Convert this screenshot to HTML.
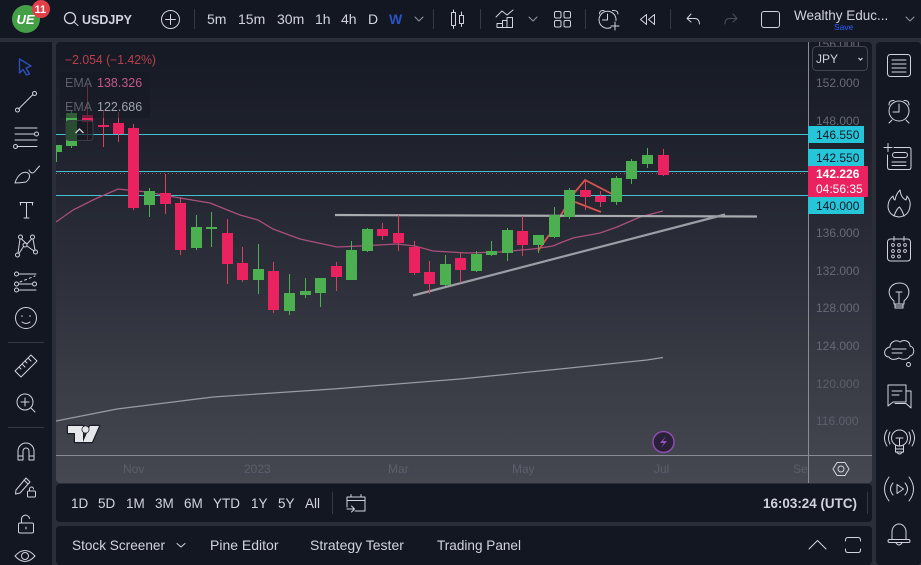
<!DOCTYPE html>
<html><head><meta charset="utf-8"><style>
html,body{margin:0;padding:0;background:#2a2e39;width:921px;height:565px;overflow:hidden}
svg{display:block}
text{font-family:"Liberation Sans",sans-serif}
.ic{fill:none;stroke:#d1d4dc;stroke-width:1;stroke-linecap:round;stroke-linejoin:round}
.t{fill:#d1d4dc;font-size:14px}
.p{font-size:12px;fill:#676a75}
.x{font-size:12px;fill:#5c5f6a}
.b{font-size:12px;fill:#131722}
.s{font-size:13.500px;fill:#d1d4dc}
</style></head><body>
<svg width="921" height="565" viewBox="0 0 921 565" xmlns="http://www.w3.org/2000/svg">
<defs>
<linearGradient id="bg" x1="0" y1="42" x2="0" y2="483" gradientUnits="userSpaceOnUse"><stop offset="0" stop-color="#151924"/><stop offset=".5" stop-color="#2b2e38"/><stop offset="1" stop-color="#464851"/></linearGradient>
<clipPath id="chart"><rect x="56" y="42" width="752" height="413"/></clipPath>
<clipPath id="axis"><rect x="809" y="42" width="63" height="413"/></clipPath>
<clipPath id="tm"><rect x="56" y="456" width="752" height="27"/></clipPath>
</defs>
<rect width="921" height="565" fill="#2a2e39"/>
<rect width="921" height="38" fill="#131722"/>
<rect x="0" y="42" width="52" height="523" fill="#131722"/>
<rect x="876" y="42" width="45" height="523" rx="4" fill="#131722"/>
<rect x="56" y="42" width="816" height="441" rx="4" fill="url(#bg)"/>
<rect x="56" y="484" width="816" height="38" rx="4" fill="#131722"/>
<rect x="56" y="526" width="816" height="39" rx="4" fill="#131722"/>

<!-- chart -->
<g clip-path="url(#chart)">
<path d="M56 134.500H808M56 171.500H808M56 195.500H808" stroke="#44c0d2" stroke-width="1" fill="none"/>
<path d="M56 173.500H808" stroke="#b04a60" stroke-width="1" stroke-dasharray="1 3" fill="none"/>
<path d="M56 222L73 210L95 199L118 189L147 192L180 198L210 203L240 215L258 220L273 229L300 239L337 247L360 246L397 244L415 246L433 251L467 253L500 252L533 249L553 246L560 243L573 238L600 233L617 227L640 217L663 211" fill="none" stroke="#a94f7c" stroke-width="1.300"/>
<path d="M56 421L117 409L213 397L333 389L460 379L560 369L647 360L663 357.500" fill="none" stroke="#9a9ca3" stroke-width="1.200"/>
<!-- drawings behind candles -->
<path d="M538 251L549 235M553 228L575 192L585 180L612 194M575 202L601 212" fill="none" stroke="#d9544f" stroke-width="1.800"/>
<path d="M335 215L757 216.500" stroke="#a9abb1" stroke-width="2.200" fill="none"/>
<path d="M413 295.500L725 214.500" stroke="#9c9ea6" stroke-width="2.200" fill="none"/>
<!-- green wicks -->
<path d="M56.500 145V162M71.500 110V148M149.500 188V217M196.500 215V250M211.500 212V247M258.500 244V294M289.500 274V315M305.500 278V298M320.500 278V307M351.500 241V280M367.500 228V252M445.500 255V286M476.500 251V272M491.500 241V256M507.500 228V261M538.500 235V253M554.500 207V238M569.500 188V219M616.500 176V205M631.500 159V184M647.500 148V168" stroke="#4caf50" stroke-width="1" fill="none"/>
<!-- red wicks -->
<path d="M87.500 85V140M103.500 110V147M118.500 112V142M133.500 124V210M165.500 174V214M180.500 197V255M227.500 219V284M242.500 247V282M273.500 262V313M336.500 262V291M382.500 223V240M398.500 215V251M414.500 241V275M429.500 261V294M460.500 253V283M522.500 216V256M585.500 180V210M600.500 191V207M663.500 149V176" stroke="#d9405f" stroke-width="1" fill="none"/>
<!-- green bodies -->
<path fill="#4caf50" d="M51 145h11v7h-11zM66 113h11v33h-11zM144 191h11v14h-11zM191 227h11v21h-11zM206 227h11v2h-11zM253 269h11v11h-11zM284 293h11v18h-11zM300 291h11v4h-11zM315 278h11v15h-11zM346 250h11v30h-11zM362 229h11v22h-11zM440 264h11v21h-11zM471 254h11v17h-11zM486 251h11v4h-11zM502 230h11v23h-11zM533 235h11v10h-11zM549 215h11v22h-11zM564 190h11v27h-11zM611 178h11v24h-11zM626 161h11v18h-11zM642 155h11v9h-11z"/>
<!-- red bodies -->
<path fill="#ea2260" d="M82 115h11v7h-11zM98 125h11v2h-11zM113 123h11v11h-11zM128 128h11v80h-11zM160 193h11v11h-11zM175 203h11v47h-11zM222 233h11v31h-11zM237 263h11v17h-11zM268 271h11v39h-11zM331 266h11v11h-11zM377 229h11v7h-11zM393 233h11v10h-11zM409 247h11v26h-11zM424 272h11v12h-11zM455 258h11v12h-11zM517 231h11v14h-11zM580 190h11v7h-11zM595 196h11v6h-11zM658 155h11v20h-11z"/>
<!-- legend -->
<rect x="60" y="72" width="90" height="46" fill="#151923" fill-opacity=".55"/>
<rect x="66" y="120.500" width="27" height="20" rx="3" fill="#15181f" fill-opacity=".65" stroke="#3a3d46"/>
<path d="M75.500 133L79.500 129L83.500 133" fill="none" stroke="#d1d4dc" stroke-width="1.300"/>
<!-- lightning -->
<circle cx="663.500" cy="442" r="10.500" fill="#2a2038" stroke="#8e4bb0" stroke-width="1.500"/>
<path d="M666 436L660 443H664L661 448L667 441H663Z" fill="#9c4fc0"/>
<!-- TV logo -->
<path d="M68 426H83V442H75V433H68ZM90 426H99L92 442H83Z" fill="#e6e7eb" stroke="#1b1d26" stroke-width="2.500" stroke-linejoin="round" style="paint-order:stroke"/>
<circle cx="85.500" cy="429.500" r="3.200" fill="#e6e7eb" stroke="#1b1d26" stroke-width="1.500" style="paint-order:stroke"/>
</g>
<text x="65" y="64" style="font-size:12.500px" fill="#b8404c" textLength="91" lengthAdjust="spacingAndGlyphs">−2.054 (−1.42%)</text>
<text x="65" y="87" style="font-size:12.500px" fill="#5d606b">EMA</text>
<text x="97" y="87" style="font-size:12.500px" fill="#c4568a">138.326</text>
<text x="65" y="111" style="font-size:12.500px" fill="#5d606b">EMA</text>
<text x="97" y="111" style="font-size:12.500px" fill="#a0a3ab">122.686</text>

<!-- axes -->
<path d="M808.500 42V483M56 455.500H872" stroke="#8a8c93" stroke-width="1" fill="none"/>
<g clip-path="url(#axis)">
<text x="816" y="48" class="p">156.000</text>
<text x="816" y="87" class="p">152.000</text>
<text x="816" y="125" class="p">148.000</text>
<text x="816" y="237" class="p">136.000</text>
<text x="816" y="275" class="p">132.000</text>
<text x="816" y="312" class="p">128.000</text>
<text x="816" y="350" class="p">124.000</text>
<text x="816" y="388" class="x">120.000</text>
<text x="816" y="425" class="x">116.000</text>
</g>
<g clip-path="url(#tm)">
<text x="123" y="473" class="x">Nov</text>
<text x="244" y="473" class="x">2023</text>
<text x="388" y="473" class="x">Mar</text>
<text x="512" y="473" class="x">May</text>
<text x="654" y="473" class="x">Jul</text>
<text x="793" y="473" class="x">Sep</text>
</g>
<rect x="812.500" y="46.500" width="55" height="24" rx="4" fill="#171b26" stroke="#434651"/>
<text x="816" y="63" style="font-size:12px" fill="#d1d4dc">JPY</text>
<path d="M858.500 58L860.500 60L862.500 58" fill="none" stroke="#d1d4dc" stroke-width="1.200"/>
<rect x="808" y="126" width="56" height="17" fill="#26c6da"/><text x="816" y="139" class="b">146.550</text>
<rect x="808" y="149" width="56" height="17" fill="#26c6da"/><text x="816" y="162" class="b">142.550</text>
<rect x="808" y="197" width="56" height="17" fill="#26c6da"/><text x="816" y="210" class="b">140.000</text>
<rect x="808" y="166" width="60" height="31" rx="1" fill="#ea2260"/>
<text x="816" y="178" style="font-size:12px;font-weight:bold" fill="#fff">142.226</text>
<text x="816" y="193" style="font-size:12px" fill="#fff">04:56:35</text>
<path d="M837 462.500H845L849 469L845 475.500H837L833 469Z M844 469a3 3 0 1 1-6 0a3 3 0 1 1 6 0" class="ic"/>

<!-- top bar -->
<circle cx="26" cy="19" r="14" fill="#43a047"/>
<text x="16.500" y="24" style="font-size:13px;font-weight:bold;font-style:italic" fill="#fff">UE</text>
<circle cx="41" cy="9" r="9" fill="#e0404a"/>
<text x="34.500" y="13" style="font-size:11px;font-weight:bold" fill="#fff">11</text>
<circle cx="70" cy="18" r="5.500" class="ic" style="stroke-width:1.300"/><path d="M74 22L78 25.500" class="ic"/>
<text x="82" y="24" style="font-size:13px;font-weight:bold" fill="#d1d4dc" textLength="50" lengthAdjust="spacingAndGlyphs">USDJPY</text>
<circle cx="170.500" cy="19.500" r="9" class="ic"/><path d="M170.500 14.500V24.500M165.500 19.500H175.500" class="ic"/>
<path d="M194.500 9V29M433.500 9V29M480.500 9V29M585.500 9V29M670.500 9V29" stroke="#363a45" fill="none"/>
<text x="207" y="24" class="t">5m</text><text x="238" y="24" class="t">15m</text><text x="277" y="24" class="t">30m</text>
<text x="315" y="24" class="t">1h</text><text x="341" y="24" class="t">4h</text><text x="368" y="24" class="t">D</text>
<text x="389" y="24" style="font-size:14px;font-weight:bold" fill="#2a52c0">W</text>
<path d="M415 17L419 21L423 17" class="ic" style="stroke:#9598a1"/>
<path d="M451.500 12.500h4v13h-4zM453.500 10v2.500M453.500 25.500v3M459.500 15.500h4v8h-4zM461.500 12v3.500M461.500 23.500v3" class="ic"/>
<path d="M496 17L502 11L507 15L513 10M497 27.500v-4h5.500v4zM502.500 27.500v-7h4.500v7zM507 27.500v-10h5.500v10z" class="ic"/>
<path d="M529 17L533 21L537 17" class="ic" style="stroke:#9598a1"/>
<rect x="554.500" y="11.500" width="6.500" height="6.500" rx="1.500" class="ic"/><rect x="564" y="11.500" width="6.500" height="6.500" rx="1.500" class="ic"/><rect x="554.500" y="20.500" width="6.500" height="6.500" rx="1.500" class="ic"/><rect x="564" y="20.500" width="6.500" height="6.500" rx="1.500" class="ic"/>
<path d="M611 27.500A8.500 8.500 0 1 1 616 20.500M607.500 14V20H602.500M599.500 14Q599.500 10 604 10.500M618 14Q618 10 612.500 10.500M611 26H619M615 22V30" class="ic"/>
<path d="M646.500 14.500L640.500 19.500L646.500 24.500ZM654.500 14.500L648.500 19.500L654.500 24.500Z" class="ic"/>
<path d="M691 14L687 18.500L691 22M687 18.500H695Q699 18.500 699.500 24" class="ic"/>
<path d="M733 14L737 18.500L733 22M737 18.500H729Q725 18.500 725 24" class="ic" style="stroke:#4a4e59"/>
<rect x="761.500" y="11.500" width="18" height="16" rx="2.500" class="ic"/>
<text x="794" y="20" style="font-size:13.500px" fill="#d1d4dc">Wealthy Educ...</text>
<text x="834" y="30" style="font-size:8.500px" fill="#2962ff">Save</text>
<path d="M906 17L910 21L914 17" class="ic" style="stroke:#9598a1"/>

<!-- left toolbar -->
<path d="M19.500 59L31 66L26 68L29.500 74L26.500 75L23 69.500L19.500 73Z" fill="none" stroke="#2d4fb8" stroke-width="1.400" stroke-linejoin="round"/>
<path d="M18.500 109L33 94.500" class="ic"/><circle cx="17.500" cy="110" r="2" class="ic"/><circle cx="34.500" cy="93.500" r="2" class="ic"/>
<path d="M15 128H37M15 134H34M15 140H37M17 146.500H37" class="ic"/><circle cx="36.500" cy="134" r="2" class="ic"/><circle cx="15.500" cy="146.500" r="2" class="ic"/>
<path d="M15 183Q17 176 22 173Q27 171 29 174Q31 178 26 182Q20 183 15 183ZM29 170Q32 176 36 170L39.500 166" class="ic"/>
<path d="M20 202.500H33M26.500 202.500V218M24 218H29M20.500 202.500V205M32.500 202.500V205" class="ic"/>
<circle cx="20.500" cy="237" r="2" class="ic"/><circle cx="32.500" cy="237" r="2" class="ic"/><circle cx="17.500" cy="255" r="2" class="ic"/><circle cx="35.500" cy="252" r="2" class="ic"/><circle cx="25" cy="245" r="2" class="ic"/>
<path d="M20 239L18 253M21.500 239L27 244M31.500 239L27 244M33 239L35 250M23.500 246.500L19 253.500M27 246L34 251" class="ic"/>
<circle cx="16.500" cy="274" r="2" class="ic"/><circle cx="16.500" cy="284" r="2" class="ic"/><circle cx="16.500" cy="290" r="2" class="ic"/><circle cx="34.500" cy="284" r="2" class="ic"/>
<path d="M19 274H36M19 284H32M19 290H36" class="ic"/><path d="M20 282L35 276" class="ic" style="stroke-dasharray:2 3"/>
<circle cx="26" cy="318" r="10.500" class="ic"/><circle cx="22" cy="316" r=".8" fill="#d1d4dc"/><circle cx="30" cy="316" r=".8" fill="#d1d4dc"/><path d="M22 322Q26 325 30 322" class="ic"/>
<path d="M8 342.500H44M8 427.500H44" stroke="#363a45" fill="none"/>
<path d="M15 371L31 355L37 361L21 377ZM19 367l2 2M22 364l3 3M25 361l2 2M28 358l3 3" class="ic"/>
<circle cx="25" cy="402" r="8" class="ic"/><path d="M31 408L35 412M25 398V406M21 402H29" class="ic"/>
<path d="M18 460V451a8 8 0 0 1 16 0V460H29V451a3 3 0 0 0-6 0V460ZM18 456H23M29 456H34" class="ic"/>
<path d="M16 490L26 478L30 482L20 493L15.500 494ZM24 480L28 484" class="ic"/><rect x="27.500" y="491" width="8" height="6" rx="1" class="ic"/><path d="M29.500 491v-2a2 2 0 0 1 4 0" class="ic"/>
<rect x="18.500" y="523" width="15" height="10" rx="1.500" class="ic"/><path d="M21.500 523V520a4 4 0 0 1 8-1.500M26 527V529" class="ic"/>
<path d="M15 556Q25 545 35 556Q25 567 15 556Z" class="ic"/><circle cx="25" cy="556" r="3.500" class="ic"/>

<!-- right toolbar -->
<rect x="887.500" y="54.500" width="23" height="22" rx="3" class="ic"/><path d="M892 60H906M892 64H906M892 68H906M892 72H906" class="ic"/>
<circle cx="899" cy="111" r="10" class="ic"/><path d="M899 104V112H893M889 105Q889 100 894 100.500M909 105Q909 100 904 100.500M892 120L889 123M906 120L909 123" class="ic"/>
<path d="M894 147.500H909Q911 147.500 911 149.500V167Q911 169.500 909 169.500H890Q887.500 169.500 887.500 167V155M888 143.500V151.500M884 147.500H892M895 152.500H905a2.500 2.500 0 0 1 0 5H895a2.500 2.500 0 0 1 0-5ZM892 162H906M892 165.500H906" class="ic"/>
<path d="M900 190Q901 198 906 200Q907 197 907 196Q911 201 910 206Q909 216 899 217Q889 216 888 207Q888 200 893 196Q893 199 895 200Q896 194 900 190ZM894 216Q897 208 899.500 207Q902 210 904 216" class="ic"/>
<rect x="887.500" y="239" width="23" height="22" rx="3" class="ic"/><path d="M894 236.500V241M904 236.500V241" class="ic"/>
<g fill="none" stroke="#d1d4dc" stroke-width=".9"><circle cx="893" cy="245" r="1.400"/><circle cx="899" cy="245" r="1.400"/><circle cx="905" cy="245" r="1.400"/><circle cx="893" cy="251" r="1.400"/><circle cx="899" cy="251" r="1.400"/><circle cx="905" cy="251" r="1.400"/><circle cx="893" cy="256.500" r="1.400"/><circle cx="899" cy="256.500" r="1.400"/></g>
<path d="M894 301Q887 295 890 288Q893 283 899.500 283Q906 283 908 288Q911 295 904 301V304H894ZM895 304V308H903V304M895 306H903M896 292H902M899 292V303" class="ic"/>
<path d="M890 347C890 342 896 339 900 342C904 339 910 341 910 346C915 347 915 355 910 356C908 360 902 360 899 358C895 360 891 360 889 357C883 357 883 348 890 347ZM892 349H906M892 353H902" class="ic"/><circle cx="908.500" cy="364.500" r="2" class="ic"/>
<path d="M888 385H906V402H893L888 406ZM892 391H902M892 395H899M906 391H911V408L906 403.500H895" class="ic"/>
<circle cx="899.500" cy="438" r="8" class="ic"/><path d="M895.500 445.500V452H903.500V445.500M896 449H903M896.500 452Q899.500 456 902.500 452M896 438H903M899.500 438V446M890 432Q887 438 890 444M887 430Q882 438 887 446M909 432Q912 438 909 444M912 430Q917 438 912 446" class="ic"/>
<path d="M897 484.500L903.500 489L897 493.500ZM893 483Q888 489 893 495M889 477Q880 489 889 501M905 483Q910 489 905 495M909 477Q918 489 909 501" class="ic"/>
<path d="M892 539V532a7 8 0 0 1 14 0V539M889.500 539.500H908.500a1.500 1.500 0 0 1 0 3H889.500a1.500 1.500 0 0 1 0-3ZM896 543Q899 547 902 543" class="ic"/>

<!-- bottom bar -->
<text x="71" y="508" class="s">1D</text><text x="98" y="508" class="s">5D</text><text x="126" y="508" class="s">1M</text><text x="155" y="508" class="s">3M</text><text x="184" y="508" class="s">6M</text><text x="213" y="508" class="s">YTD</text><text x="251" y="508" class="s">1Y</text><text x="278" y="508" class="s">5Y</text><text x="305" y="508" class="s">All</text>
<path d="M332.500 492V514M867.500 492V514" stroke="#363a45" fill="none"/>
<path d="M347 507V497H365V511H355M347 500.500H365M351 494.500V497M361 494.500V497M347 509H354M351.500 506L354.500 509L351.500 512" class="ic"/>
<text x="763" y="508" style="font-size:14px;font-weight:bold" fill="#d1d4dc" textLength="94" lengthAdjust="spacingAndGlyphs">16:03:24 (UTC)</text>
<text x="72" y="550" class="t" textLength="93" lengthAdjust="spacingAndGlyphs">Stock Screener</text>
<path d="M177 543.500L181 547L185 543.500" class="ic"/>
<text x="210" y="550" class="t">Pine Editor</text>
<text x="310" y="550" class="t">Strategy Tester</text>
<text x="437" y="550" class="t" textLength="84" lengthAdjust="spacingAndGlyphs">Trading Panel</text>
<path d="M809 549L817.500 540.500L826 549" class="ic"/>
<path d="M845.500 541V540Q845.500 537.500 848 537.500H858Q860.500 537.500 860.500 540V541M845.500 549V550Q845.500 552.500 848 552.500H858Q860.500 552.500 860.500 550V549" class="ic"/>
</svg>
</body></html>
